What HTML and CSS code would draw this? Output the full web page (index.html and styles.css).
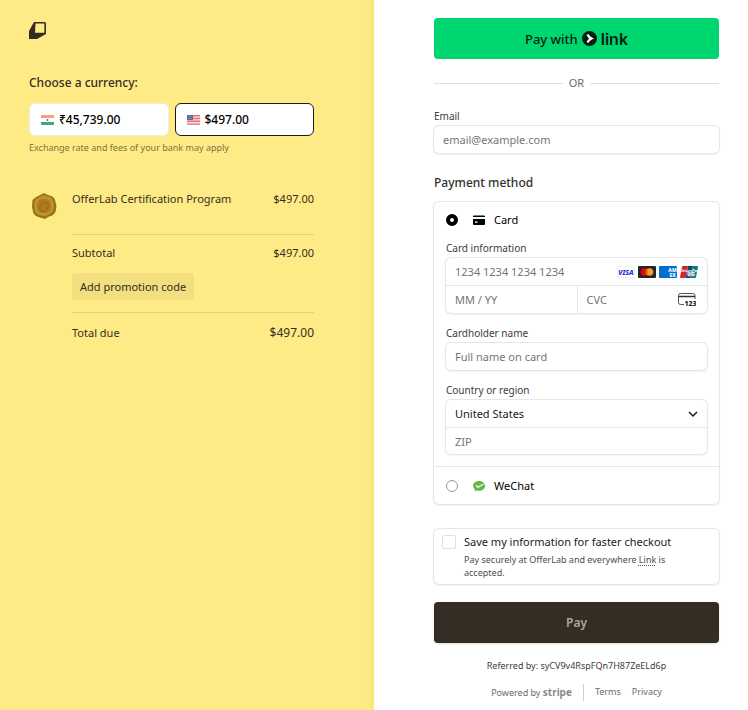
FILE: index.html
```
<!DOCTYPE html>
<html lang="en">
<head>
    <meta charset="UTF-8">
    <meta name="viewport" content="width=device-width, initial-scale=1.0">
    <title>OfferLab Checkout</title>
    <link rel="stylesheet" href="styles.css">
</head>
<body>
    <div class="checkout">
        <section class="summary">
            <svg class="logo" viewBox="0 0 17 17" aria-label="OfferLab">
                <path d="M5 0H15.5Q17 0 17 1.5V12L8 17H0V9Z" fill="#352d24"/>
                <path d="M6.500 1.600H15.400V10.800H6Z" fill="#ffeb86"/>
            </svg>

            <h2 class="currency-title">Choose a currency:</h2>
            <div class="currencies">
                <button type="button" class="currency">
                    <svg class="flag" viewBox="0 0 13 10">
                        <rect width="13" height="10" rx="1" fill="#fff"/>
                        <path d="M1 0H12Q13 0 13 1V3H0V1Q0 0 1 0Z" fill="#f5a275"/>
                        <path d="M0 7H13V9Q13 10 12 10H1Q0 10 0 9Z" fill="#3aa876"/>
                        <circle cx="6.500" cy="5" r="1" fill="#5c62a8"/>
                    </svg>
                    ₹45,739.00
                </button>
                <button type="button" class="currency selected">
                    <svg class="flag" viewBox="0 0 13 10">
                        <rect width="13" height="10" rx="1" fill="#f8e4e4"/>
                        <path d="M0 .7H13M0 3.500H13M0 6.300H13M0 9.100H13" stroke="#e8707c" stroke-width="1.400"/>
                        <rect width="6" height="5" fill="#5a68a0"/>
                        <path d="M1 1.500H5M1 3.500H5" stroke="#a8b0d0" stroke-width=".6" stroke-dasharray="1 .6"/>
                    </svg>
                    $497.00
                </button>
            </div>
            <p class="note">Exchange rate and fees of your bank may apply</p>

            <div class="order">
                <svg class="product-image" viewBox="0 0 30 30">
                    <path d="M15 2L19 4Q25 5 26 9L27.500 15L26.500 21Q24 25 20 25.500L16 28L11 26.500Q5 25 4 21L3 16L3.500 9Q6 6 10 4.500Z" fill="#93751b"/>
                    <path d="M15 4L21 6Q24 8 24.500 11L25 16L24 21L16 25.500L10 24Q6 22 5.500 19L5 13L6.500 8Z" fill="#bf8f27"/>
                    <circle cx="15" cy="15" r="8" fill="#b17c17" stroke="#c99a36"/>
                    <path d="M13 12H19V17L15 20H11V16Z" fill="none" stroke="#96691a"/>
                </svg>
                <div class="order-lines">
                    <div class="line item">
                        <span>OfferLab Certification Program</span>
                        <span>$497.00</span>
                    </div>
                    <div class="subtotal">
                        <div class="line">
                            <span>Subtotal</span>
                            <span>$497.00</span>
                        </div>
                        <button type="button" class="promo">Add promotion code</button>
                    </div>
                    <div class="line total">
                        <span>Total due</span>
                        <span class="amount">$497.00</span>
                    </div>
                </div>
            </div>
        </section>

        <form class="payment">
            <button type="button" class="link-button">
                Pay with
                <svg class="link-icon" viewBox="0 0 15 15">
                    <circle cx="7.500" cy="7.500" r="7.500" fill="#011e0f"/>
                    <path d="M5.500 3.500Q6.500 6 9.500 7.500Q6.500 9 5.500 11.500" fill="none" stroke="#fff" stroke-width="2.200"/>
                </svg>
                <span class="link-word">link</span>
            </button>
            <div class="divider">OR</div>

            <label class="label" for="email">Email</label>
            <div class="field">
                <input class="input" type="email" id="email" placeholder="email@example.com">
            </div>

            <h2 class="payment-title">Payment method</h2>
            <div class="methods">
                <div class="card-method">
                    <label class="method">
                        <input type="radio" name="method" class="radio" checked>
                        <svg class="method-icon" viewBox="0 0 12 12">
                            <path d="M1 1.500H11Q12 1.500 12 2.500V3H0V2.500Q0 1.500 1 1.500ZM0 5H12V10Q12 11 11 11H1Q0 11 0 10Z" fill="#000"/>
                            <rect x="2" y="7.500" width="2.500" height="1.300" fill="#fff"/>
                        </svg>
                        Card
                    </label>

                    <label class="label" for="card-number">Card information</label>
                    <div class="field">
                        <div class="row">
                            <input class="input" type="text" id="card-number" placeholder="1234 1234 1234 1234">
                            <div class="brands">
                                <svg class="brand" viewBox="0 0 18 12">
                                    <rect x=".5" y=".5" width="17" height="11" rx="1" fill="#fff" stroke="#ebeefa"/>
                                    <text x="9" y="8.500" class="visa-text">VISA</text>
                                </svg>
                                <svg class="brand" viewBox="0 0 18 12">
                                    <rect width="18" height="12" rx="1" fill="#252525"/>
                                    <circle cx="6.500" cy="6" r="3.800" fill="#eb001b"/>
                                    <circle cx="11.500" cy="6" r="3.800" fill="#f79e1b"/>
                                    <path d="M9 3.200A3.800 3.800 0 0 1 9 8.800A3.800 3.800 0 0 1 9 3.200Z" fill="#ff5f00"/>
                                </svg>
                                <svg class="brand" viewBox="0 0 18 12">
                                    <rect width="18" height="12" rx="1" fill="#016fd0"/>
                                    <text x="13.500" y="6" class="amex-text">AM</text>
                                    <text x="13.500" y="10.500" class="amex-text">EX</text>
                                </svg>
                                <svg class="brand" viewBox="0 0 18 12">
                                    <path d="M3 0H8L5.500 12H1Q0 12 0 11L2 1Q2 0 3 0Z" fill="#d8232f"/>
                                    <path d="M8 0H13L10.500 12H5.500Z" fill="#17456b"/>
                                    <path d="M13 0H17Q18 0 18 1L16 11Q16 12 15 12H10.500Z" fill="#047b7c"/>
                                    <text x="9.500" y="6" class="union-text">UnionPay</text>
                                    <text x="11" y="10" class="union-text">银联</text>
                                </svg>
                            </div>
                        </div>
                        <div class="split">
                            <input class="input" type="text" aria-label="Expiration" placeholder="MM / YY">
                            <div class="cvc">
                                <input class="input" type="text" aria-label="CVC" placeholder="CVC">
                                <svg class="cvc-icon" viewBox="0 0 18 13">
                                    <path d="M6 11.500H2.500Q.5 11.500 .5 9.500V2.500Q.5 .5 2.500 .5H15Q17 .5 17 2.500V6" fill="none" stroke="#555"/>
                                    <path d="M.5 3.500H17" stroke="#333" stroke-width="1.500"/>
                                    <text x="12.500" y="12.500" class="cvc-text">123</text>
                                </svg>
                            </div>
                        </div>
                    </div>

                    <label class="label spaced" for="cardholder">Cardholder name</label>
                    <div class="field">
                        <input class="input" type="text" id="cardholder" placeholder="Full name on card">
                    </div>

                    <label class="label spaced" for="country">Country or region</label>
                    <div class="field">
                        <div class="row">
                            <select class="input select" id="country">
                                <option>United States</option>
                                <option>India</option>
                            </select>
                            <svg class="chevron" viewBox="0 0 10 10">
                                <path d="M1 3L5 7L9 3" fill="none" stroke="#1a1a1a" stroke-width="1.500"/>
                            </svg>
                        </div>
                        <input class="input zip" type="text" aria-label="ZIP" placeholder="ZIP">
                    </div>
                </div>
                <label class="method wechat">
                    <input type="radio" name="method" class="radio">
                    <svg class="method-icon" viewBox="0 0 12 12">
                        <path d="M6 1C9.500 1 12 3.200 12 6S9.500 10.800 6 10.800Q5 10.800 4 10.500L1.800 11.600L2.200 9.700Q0 8.300 0 6C0 3.200 2.500 1 6 1Z" fill="#63b84a"/>
                        <path d="M3 5.500L5 7.200L10.500 4" fill="none" stroke="#fff" stroke-width="1.200"/>
                    </svg>
                    WeChat
                </label>
            </div>

            <div class="save">
                <input type="checkbox" class="checkbox" id="save-info">
                <div>
                    <label class="save-title" for="save-info">Save my information for faster checkout</label>
                    <p class="save-text">Pay securely at OfferLab and everywhere <a href="#" class="dotted">Link</a> is accepted.</p>
                </div>
            </div>

            <button type="submit" class="pay">Pay</button>
            <p class="referred">Referred by: syCV9v4RspFQn7H87ZeELd6p</p>
            <footer class="footer">
                <a href="#" class="powered">Powered by <span class="stripe">stripe</span></a>
                <a href="#">Terms</a>
                <a href="#">Privacy</a>
            </footer>
        </form>
    </div>
</body>
</html>
```

FILE: styles.css
```
* {
    box-sizing: border-box;
}
body {
    margin: 0;
    font-family: "Noto Sans", "Open Sans", sans-serif;
    font-size: 11px;
    line-height: 16px;
    color: #1a1a1a;
    background: #fff;
}
h2, p {
    margin: 0;
}
button, input, select {
    font: inherit;
    color: inherit;
    margin: 0;
}
button {
    border: none;
    cursor: pointer;
}
.checkout {
    display: grid;
    grid-template-columns: 1fr 1fr;
    min-height: 100vh;
}

/* Order summary */
.summary {
    background: #ffeb86;
    color: #352d24;
    padding: 22px 60px 30px 29px;
    box-shadow: inset -8px 0 8px -8px rgba(120, 100, 0, 0.1);
}
.logo {
    display: block;
    width: 17px;
    height: 17px;
}
.currency-title {
    margin: 34px 0 10px;
    font-size: 12px;
    font-weight: 500;
    line-height: 20px;
}
.currencies {
    display: grid;
    grid-template-columns: 1fr 1fr;
    gap: 6px;
}
.currency {
    display: flex;
    align-items: center;
    gap: 5px;
    height: 33px;
    padding: 0 11px;
    font-size: 12px;
    font-weight: 500;
    color: #000;
    background: #fff;
    border: 1px solid #eeeee6;
    border-radius: 6px;
}
.currency.selected {
    border-color: #1a1a1a;
}
.flag {
    width: 13px;
    height: 10px;
}
.note {
    margin-top: 4px;
    font-size: 9px;
    color: #7d7344;
}
.order {
    display: flex;
    gap: 13px;
    margin-top: 35px;
}
.product-image {
    flex: none;
    width: 30px;
    height: 30px;
}
.order-lines {
    flex: 1;
}
.line {
    display: flex;
    justify-content: space-between;
}
.item {
    padding-bottom: 27px;
}
.subtotal {
    padding: 10px 0 12px;
    border-top: 1px solid #e6d377;
    border-bottom: 1px solid #e6d377;
}
.promo {
    height: 27px;
    margin-top: 12px;
    padding: 0 8px;
    background: #f2e080;
    border-radius: 4px;
}
.total {
    padding-top: 12px;
}
.amount {
    font-size: 12px;
}

/* Payment form */
.payment {
    padding: 18px 29px 10px 60px;
}
.link-button {
    display: flex;
    align-items: center;
    justify-content: center;
    gap: 4px;
    width: 100%;
    height: 41px;
    font-size: 13px;
    font-weight: 500;
    color: #011e0f;
    background: #00d66f;
    border-radius: 4px;
}
.link-icon {
    width: 15px;
    height: 15px;
}
.link-word {
    font-family: Inter, sans-serif;
    font-size: 16px;
    font-weight: 600;
}
.divider {
    display: flex;
    align-items: center;
    gap: 6px;
    margin: 16px 0 17px;
    color: #6b6b6b;
}
.divider::before,
.divider::after {
    content: "";
    flex: 1;
    height: 1px;
    background: #e0e0e0;
}
.label {
    display: block;
    margin-bottom: 2px;
    font-size: 10px;
    color: #3d3d3d;
}
.label.spaced {
    margin-top: 12px;
}
.field,
.methods,
.save {
    background: #fff;
    border-radius: 5px;
    box-shadow: 0 0 0 1px #e6e6e6, 0 1px 2px 1px rgba(0, 0, 0, 0.05);
}
.input {
    display: block;
    width: 100%;
    min-width: 0;
    height: 27px;
    padding: 0 9px;
    background: transparent;
    border: none;
    outline: none;
}
.input::placeholder {
    color: #757575;
    opacity: 1;
}
.payment-title {
    margin: 20px 0 9px;
    font-size: 12px;
    font-weight: 500;
    line-height: 20px;
    color: #303030;
}
.card-method {
    padding: 10px 12px 12px;
}
.method {
    display: flex;
    align-items: center;
    color: #000;
}
.card-method .method {
    margin-bottom: 12px;
}
.radio {
    appearance: none;
    width: 12px;
    height: 12px;
    border: 1px solid #999;
    border-radius: 50%;
    background: #fff;
}
.radio:checked {
    border: 4px solid #000;
}
.method-icon {
    width: 12px;
    height: 12px;
    margin: 0 9px 0 15px;
}
.row {
    display: flex;
    align-items: center;
}
.brands {
    display: flex;
    flex: none;
    gap: 3px;
    padding-right: 9px;
}
.brand {
    width: 18px;
    height: 12px;
}
.visa-text {
    font-size: 7px;
    font-weight: 800;
    font-style: italic;
    fill: #1a2fd0;
    text-anchor: middle;
}
.amex-text {
    font-size: 5px;
    font-weight: 800;
    fill: #fff;
    text-anchor: middle;
}
.union-text {
    font-family: "Open Sans", "Noto Sans CJK SC", sans-serif;
    font-size: 4px;
    font-weight: 700;
    fill: #fff;
    text-anchor: middle;
}
.split {
    display: grid;
    grid-template-columns: 1fr 1fr;
    border-top: 1px solid #e6e6e6;
}
.cvc {
    display: flex;
    align-items: center;
    padding-right: 11px;
    border-left: 1px solid #e6e6e6;
}
.cvc-icon {
    flex: none;
    width: 18px;
    height: 13px;
}
.cvc-text {
    font-size: 7px;
    font-weight: 800;
    fill: #1a1a1a;
    text-anchor: middle;
}
.select {
    appearance: none;
}
.chevron {
    flex: none;
    width: 10px;
    height: 10px;
    margin-right: 9px;
    pointer-events: none;
}
.zip {
    border-top: 1px solid #e6e6e6;
}
.wechat {
    height: 38px;
    padding: 0 12px;
    border-top: 1px solid #e6e6e6;
}
.save {
    display: flex;
    gap: 8px;
    margin-top: 25px;
    padding: 5px 40px 5px 8px;
}
.checkbox {
    appearance: none;
    flex: none;
    width: 14px;
    height: 14px;
    margin-top: 1px;
    border: 1px solid #e0e0e0;
    border-radius: 2px;
    background: #fff;
}
.save-title {
    display: block;
}
.save-text {
    margin-top: 3px;
    font-size: 9px;
    line-height: 13px;
    color: #4d4d4d;
}
.dotted {
    color: inherit;
    text-decoration: underline dotted;
    text-underline-offset: 2px;
}
.pay {
    display: block;
    width: 100%;
    height: 41px;
    margin-top: 18px;
    font-size: 12px;
    font-weight: 600;
    color: #aba8a3;
    background: #352d24;
    border-radius: 4px;
    box-shadow: 0 1px 2px rgba(0, 0, 0, 0.15);
}
.referred {
    margin-top: 15px;
    font-size: 9px;
    color: #3d3d3d;
    text-align: center;
}
.footer {
    display: flex;
    justify-content: center;
    gap: 11px;
    margin-top: 10px;
    font-size: 9px;
}
.footer a {
    color: #6b6b6b;
    text-decoration: none;
}
.powered {
    padding-right: 11px;
    border-right: 1px solid #cfcfcf;
}
.stripe {
    font-size: 10px;
    font-weight: 700;
    color: #8a8a8a;
}
```
